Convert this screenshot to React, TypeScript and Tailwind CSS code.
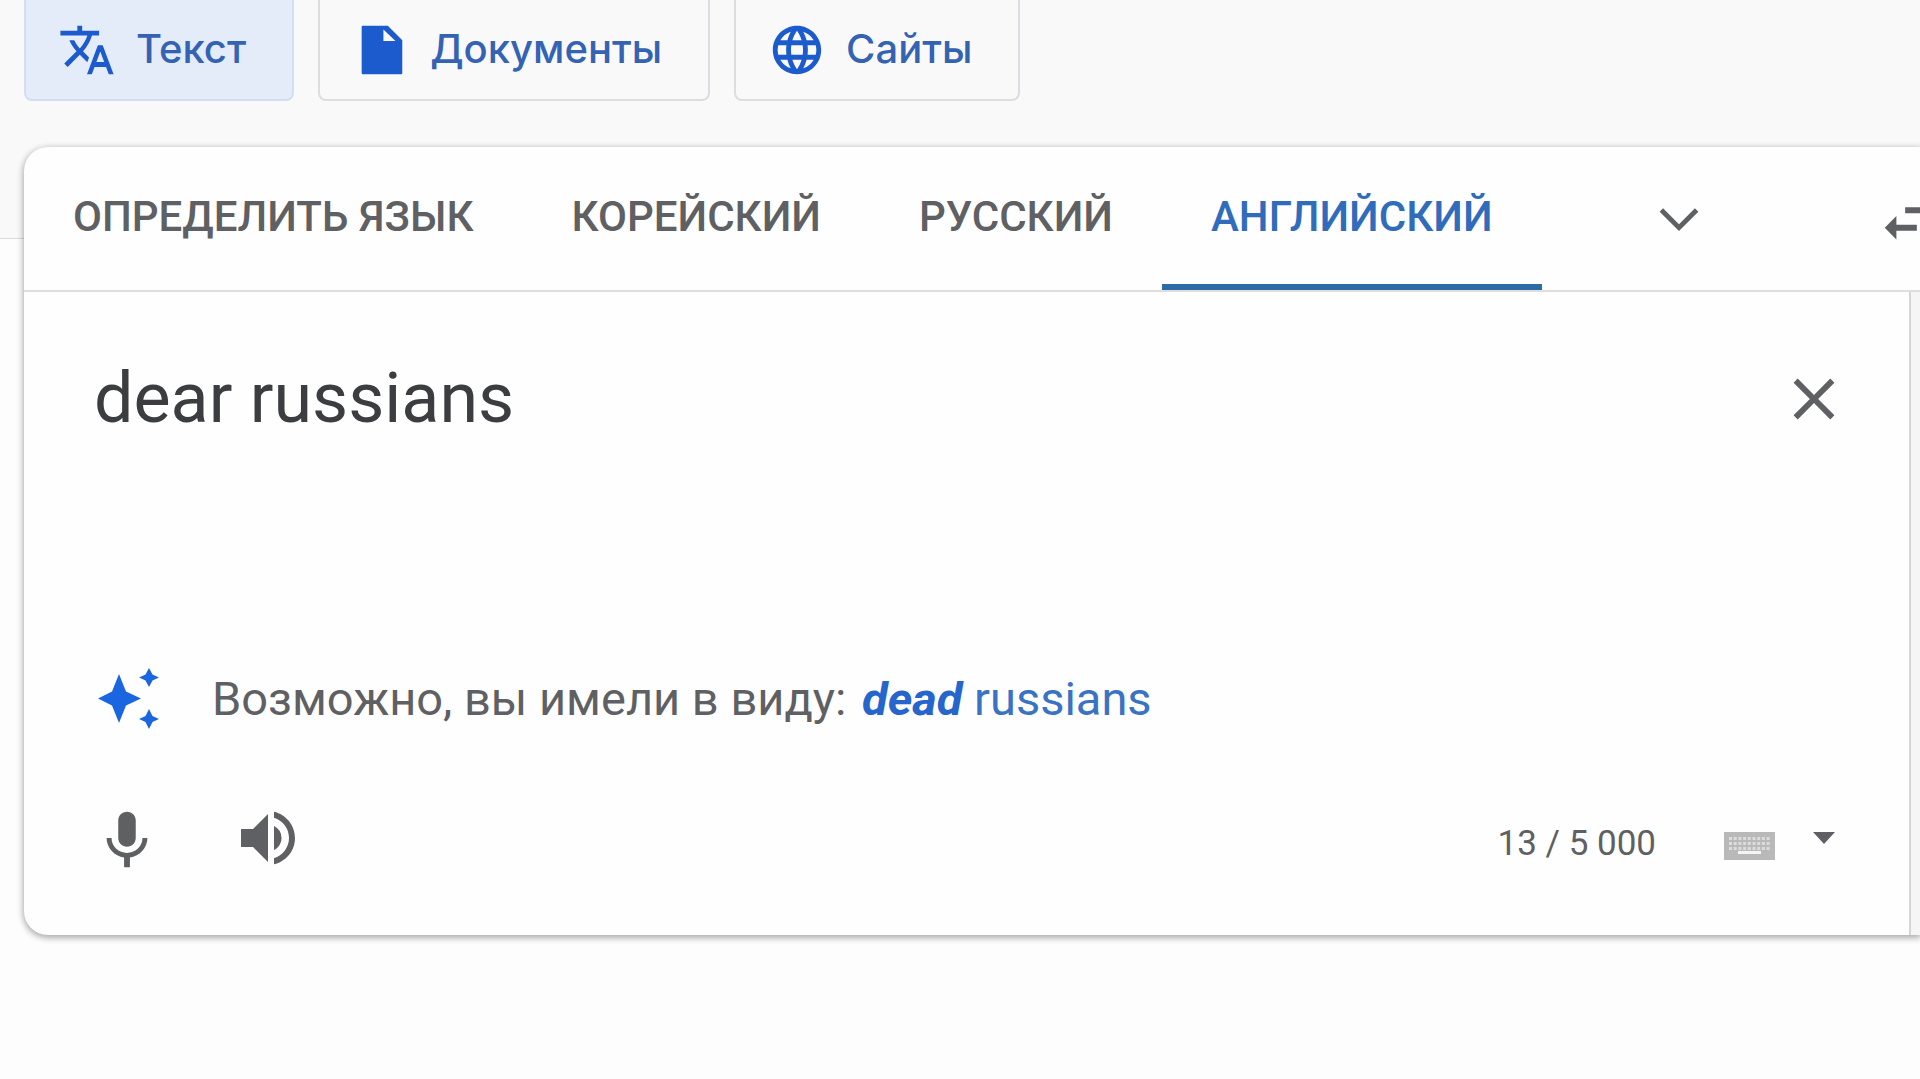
import { MdClose, MdLanguage, MdSwapHoriz, MdTranslate, MdVolumeUp } from "react-icons/md";

const languages = ["Определить язык", "Корейский", "Русский", "Английский"];
const activeLanguage = "Английский";

const modes = [
  { label: "Текст", icon: MdTranslate, className: "border-[#d3dfee] bg-[#e3ecf8]" },
  { label: "Документы", icon: DocumentIcon, className: "border-[#dcdde0]" },
  { label: "Сайты", icon: MdLanguage, className: "border-[#dcdde0]" },
];

function DocumentIcon({ className }: { className?: string }) {
  return (
    <svg viewBox="0 0 24 24" className={className} fill="currentColor" aria-hidden="true">
      <path d="M4.5 2H14.800L20.800 8V21.500a.5.5 0 0 1-.5.5H4.500a.5.5 0 0 1-.5-.5V2.500a.5.5 0 0 1 .5-.5zM13 3.500V8.300H18z" fillRule="evenodd" />
    </svg>
  );
}

function ChevronIcon() {
  return (
    <svg viewBox="0 0 24 24" className="size-[58px]" fill="currentColor" aria-hidden="true">
      <path d="M5.41 7.59L4 9l8 8 8-8-1.41-1.41L12 14.17" />
    </svg>
  );
}

function MicIcon() {
  return (
    <svg viewBox="0 0 24 24" className="size-[70px]" fill="currentColor" aria-hidden="true">
      <path d="M12 15c1.66 0 2.99-1.34 2.99-3L15 6c0-1.66-1.34-3-3-3S9 4.34 9 6v6c0 1.66 1.34 3 3 3zm5.3-3c0 3-2.54 5.1-5.3 5.1S6.7 15 6.7 12H5c0 3.42 2.72 6.23 6 6.72V22h2v-3.28c3.28-.48 6-3.3 6-6.72h-1.7z" />
    </svg>
  );
}

function SparkleIcon() {
  return (
    <svg viewBox="0 0 62 62" className="size-[62px]" fill="#1a66e0" aria-hidden="true">
      <path d="M21 6L28 23.500L43 30.500L28 37.500L21 55L14 37.500L0 30.500L14 23.500z" />
      <path d="M51 0L54.500 6.500L61 9.500L54.500 12.500L51 19L47.500 12.500L41 9.500L47.500 6.500z" />
      <path d="M51 41L54.500 48L61 51L54.500 54L51 61L47.500 54L41 51L47.500 48z" />
    </svg>
  );
}

function KeyboardIcon() {
  const columns = [0, 1, 2, 3, 4, 5, 6, 7, 8];
  return (
    <svg viewBox="0 0 51 28" className="h-7 w-[51px]" aria-hidden="true">
      <rect width="51" height="28" fill="#b9b9b9" />
      {[5, 10, 15].map((y) =>
        columns.map((column) => (
          <rect key={`${y}-${column}`} x={5 + column * 4.7} y={y} width="3" height="3" fill="#dcdcdc" />
        ))
      )}
      <rect x="14" y="19" width="23" height="3" fill="#f4f4f4" />
    </svg>
  );
}

export default function App() {
  return (
    <div className="min-h-screen overflow-hidden bg-[#fdfdfd] font-['Roboto','Liberation_Sans',sans-serif] text-[#5f6063]">
      <header className="border-b border-[#d9d9d9] bg-[#f9f9f9] px-6 pb-[137px]">
        <nav className="flex gap-6" aria-label="Режим перевода">
          {modes.map(({ label, icon: Icon, className }) => (
            <button key={label} className={`flex h-[101px] items-center gap-5 rounded-b-lg border-2 border-t-0 pr-[46px] pl-8 font-['Inter','Roboto',sans-serif] text-[40px] leading-[48px] font-medium text-[#3463b4] ${className}`}>
              <Icon className="size-[58px] text-[#1c5bce]" />
              <span className="pb-0.5">{label}</span>
            </button>
          ))}
        </nav>
      </header>

      <main className="-mt-[92px] pl-6">
        <section className="rounded-l-3xl bg-[#fefefe] shadow-[0_2px_6px_1px_rgba(0,0,0,0.32)]">
          <div className="flex h-[145px] items-stretch border-b-2 border-[#dedede]">
            {languages.map((language) => (
              <button
                key={language}
                className={`shrink-0 border-b-[6px] px-[49px] pt-0.5 text-[42px] leading-[48px] font-medium uppercase ${language === activeLanguage ? "border-[#2f6ca6] text-[#2f6cbc]" : "border-transparent"}`}
              >
                {language}
              </button>
            ))}
            <div className="flex min-w-0 flex-1 items-center justify-end">
              <button aria-label="Другие языки" className="mr-[168px] shrink-0">
                <ChevronIcon />
              </button>
              <button aria-label="Поменять языки" className="-mr-[26px] shrink-0">
                <MdSwapHoriz className="size-[70px]" />
              </button>
            </div>
          </div>

          <div className="flex">
            <div className="min-w-0 flex-1 pb-[61px]">
              <div className="flex items-start pt-16 pr-[60px] pl-[70px]">
                <textarea
                  aria-label="Исходный текст"
                  defaultValue="dear russians"
                  spellCheck={false}
                  className="h-[312px] min-w-0 flex-1 resize-none bg-transparent text-[70px] leading-[84px] text-[#3c3d40] outline-none"
                />
                <button aria-label="Очистить" className="pt-2">
                  <MdClose className="size-[70px]" />
                </button>
              </div>

              <div className="flex items-center gap-[52px] pl-[74px]">
                <SparkleIcon />
                <p className="text-[47px] leading-[56px]">
                  Возможно, вы имели в виду:{" "}
                  <a href="#suggestion" className="ml-1 text-[#3a72c4]">
                    <b className="font-bold text-[#2565cc] italic">dead</b> russians
                  </a>
                </p>
              </div>

              <div className="mt-[72px] flex items-center pr-[74px] pl-[68px]">
                <button aria-label="Голосовой ввод">
                  <MicIcon />
                </button>
                <button aria-label="Прослушать" className="ml-[70px]">
                  <MdVolumeUp className="size-[72px]" />
                </button>
                <span className="ml-auto pt-3 text-[35px] leading-[44px]">13 / 5 000</span>
                <button aria-label="Экранная клавиатура" className="ml-[68px] pt-4">
                  <KeyboardIcon />
                </button>
                <button aria-label="Способ ввода" className="ml-[38px]">
                  <svg viewBox="0 0 22 12" className="h-3 w-[22px]" fill="currentColor" aria-hidden="true">
                    <path d="M0 0h22L11 12z" />
                  </svg>
                </button>
              </div>
            </div>
            <div className="w-[11px] border-l-2 border-[#d6d6d6] bg-[#f5f5f5]" />
          </div>
        </section>
      </main>
    </div>
  );
}
